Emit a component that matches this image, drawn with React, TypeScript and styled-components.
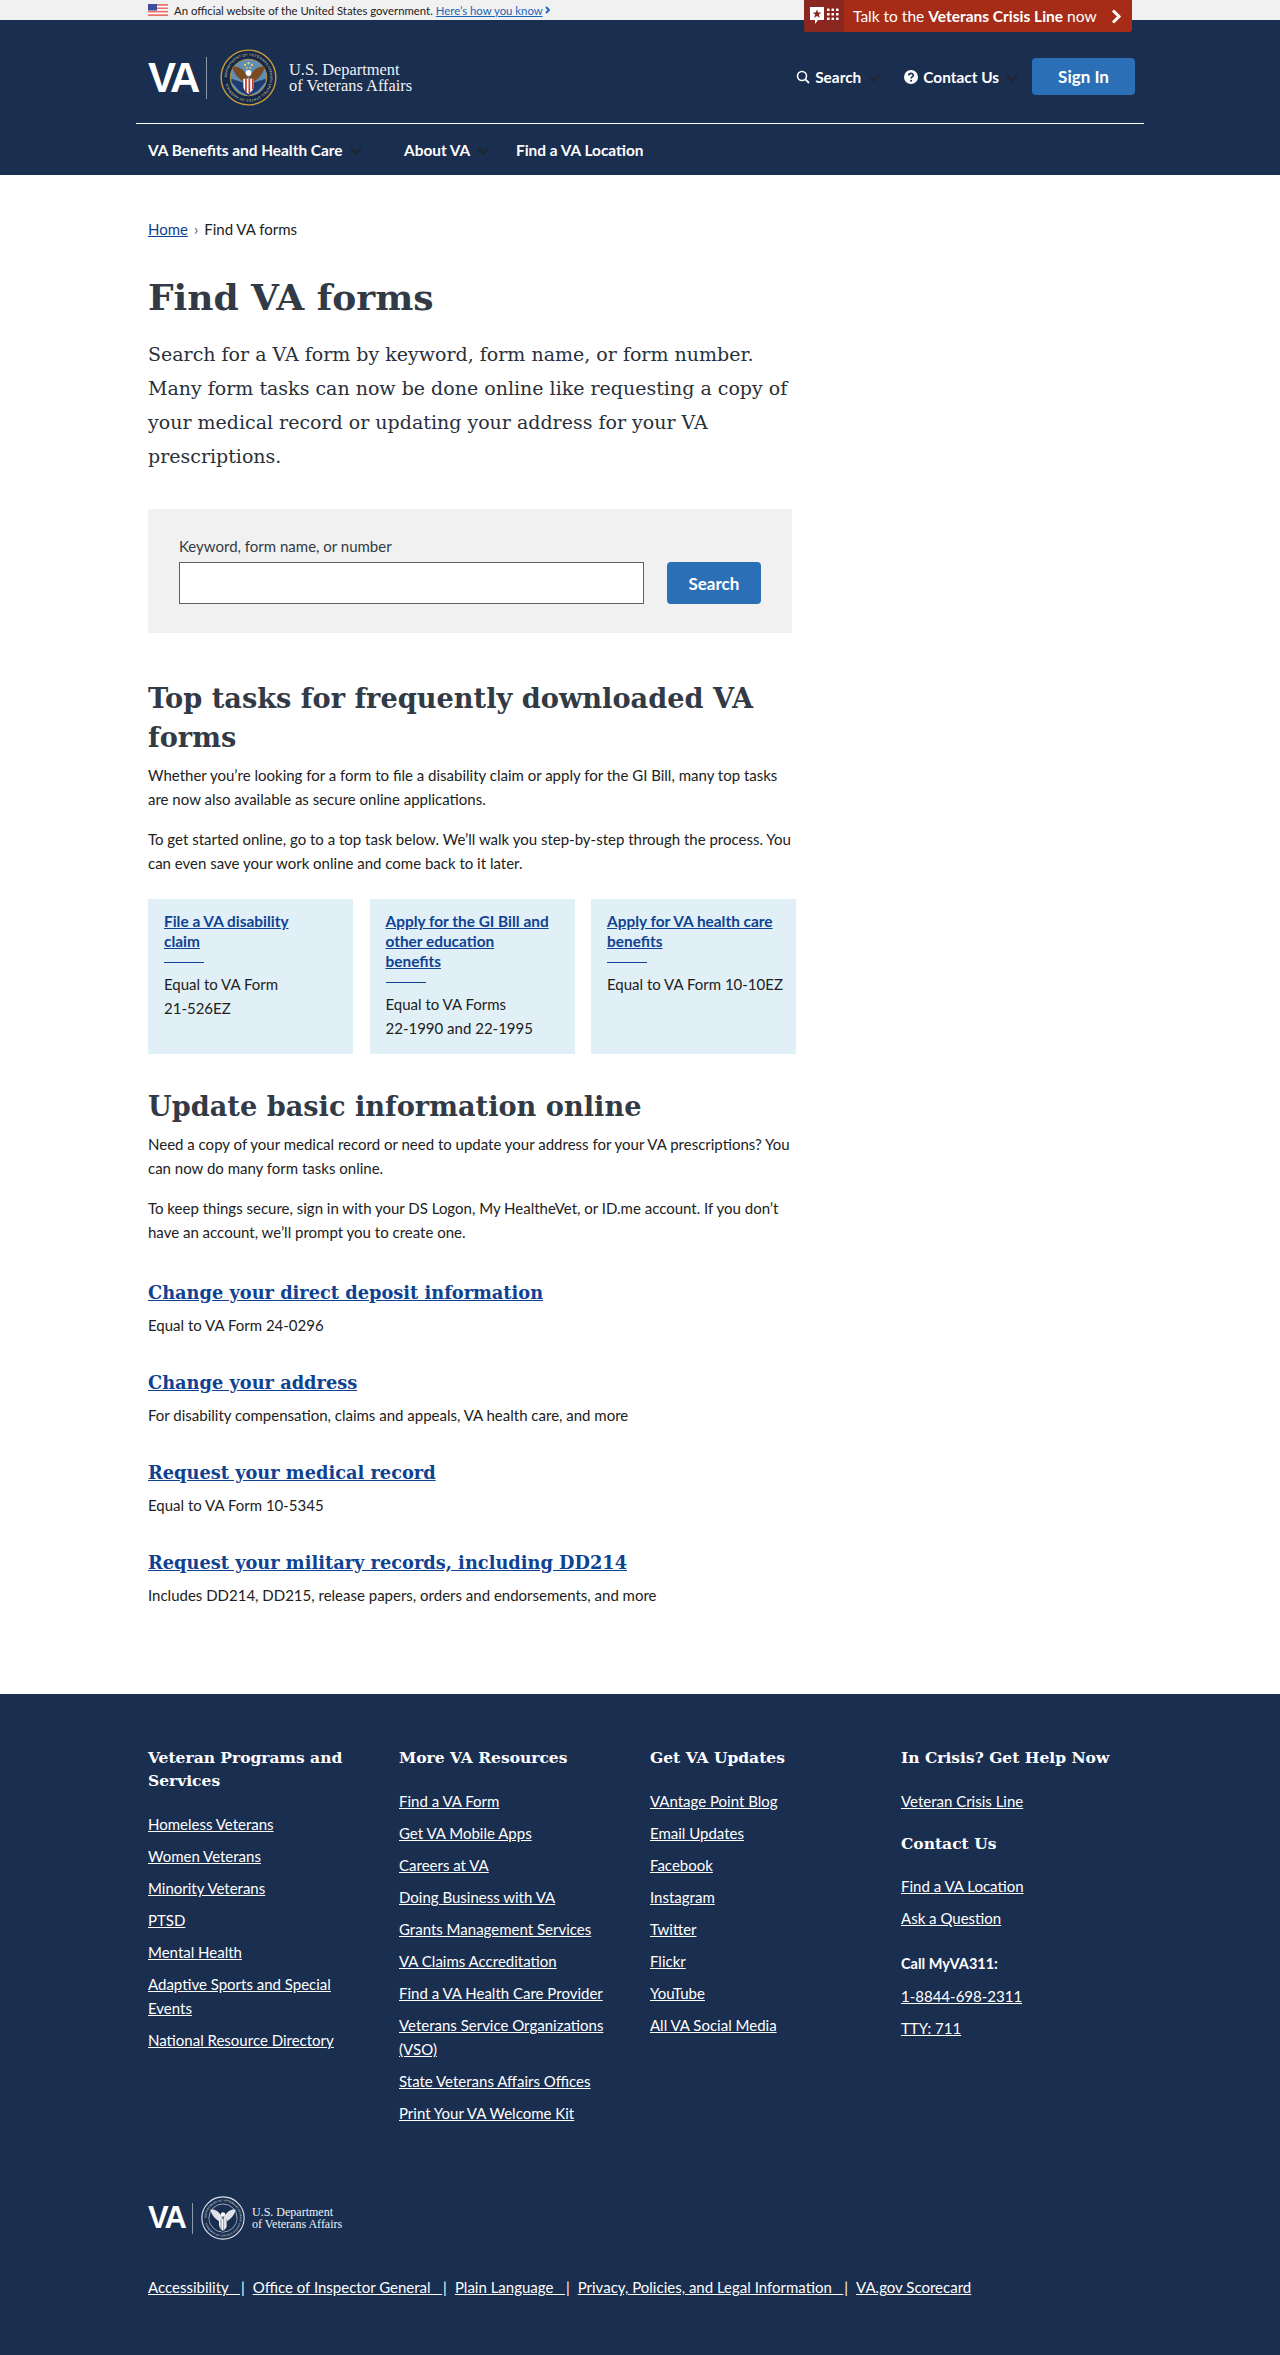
import React from "react";
import styled, { createGlobalStyle } from "styled-components";

const SANS = `"Lato", "Liberation Sans", sans-serif`;
const SLAB = `"DejaVu Serif", "Liberation Serif", serif`;
const NAVY = "#1a2e4f";
const LINK = "#0f4292";

const GlobalStyle = createGlobalStyle`
  html, body { margin: 0; padding: 0; background: #fff; }
  body { font-family: ${SANS}; font-size: 15px; color: #212121; }
  * { box-sizing: border-box; }
  a { cursor: pointer; }
`;

const Page = styled.div`
  width: 1280px;
  height: 2355px;
  position: relative;
  display: flex;
  flex-direction: column;
`;

/* top banner */
const Banner = styled.div`
  height: 20px;
  background: #f1f1f1;
  padding-left: 148px;
  display: flex;
  align-items: center;
  font-size: 11.35px;
  color: #212121;
`;

const Flag = styled.svg`
  width: 20px;
  height: 12px;
  margin-right: 6px;
`;

const BannerLink = styled.a`
  color: #1b64b8;
  text-decoration: underline;
  margin-left: 3px;
`;

const BannerChevron = styled.svg`
  width: 6px;
  height: 8px;
  margin-left: 2px;
`;

const CrisisButton = styled.a`
  position: absolute;
  top: 0;
  left: 804px;
  width: 328px;
  height: 32px;
  background: #a62c18;
  border-radius: 0 0 3px 3px;
  display: flex;
  align-items: center;
  color: #fff;
  font-size: 15.5px;
  overflow: hidden;
  b { font-weight: 700; }
`;

const CrisisIcon = styled.span`
  width: 40px;
  height: 32px;
  background: #8a2820;
  display: flex;
  align-items: center;
  justify-content: center;
  margin-right: 9px;
`;

const CrisisLabel = styled.span`
  flex: 1;
  white-space: pre;
`;

const CrisisChevron = styled.svg`
  width: 11px;
  height: 15px;
  margin-right: 10px;
`;

/* header */
const Header = styled.header`
  background: ${NAVY};
  height: 155px;
  padding: 0 136px;
  color: #fff;
`;

const HeaderTop = styled.div`
  height: 104px;
  border-bottom: 1px solid #fff;
  display: flex;
  align-items: flex-start;
  justify-content: space-between;
  padding: 29px 9px 0 12px;
`;

const LogoRow = styled.div`
  display: flex;
  align-items: center;
  height: 57px;
`;

const LogoVA = styled.span<{ $small?: boolean }>`
  font-family: "Liberation Sans", sans-serif;
  font-weight: 700;
  font-size: ${(p) => (p.$small ? "31px" : "42px")};
  letter-spacing: ${(p) => (p.$small ? "-2px" : "-3px")};
  width: ${(p) => (p.$small ? "35px" : "48px")};
  color: #fff;
`;

const LogoBar = styled.span<{ $small?: boolean }>`
  width: 1px;
  height: ${(p) => (p.$small ? "31px" : "42px")};
  background: #8d99ab;
  margin: ${(p) => (p.$small ? "0 8px 0 9px" : "0 13px 0 10px")};
`;

const LogoText = styled.span<{ $small?: boolean }>`
  font-family: "Liberation Serif", serif;
  font-size: ${(p) => (p.$small ? "12px" : "16.4px")};
  line-height: ${(p) => (p.$small ? "12px" : "16px")};
  margin-left: ${(p) => (p.$small ? "7px" : "12px")};
  color: #f0f2f5;
  white-space: nowrap;
`;

const UtilityRow = styled.div`
  display: flex;
  align-items: center;
  font-weight: 700;
  font-size: 15.4px;
  margin-top: 9px;
`;

const UtilityItem = styled.span<{ $gap: number }>`
  display: flex;
  align-items: center;
  margin-right: ${(p) => p.$gap}px;
  svg.lead { margin-right: 5px; }
`;

const Caret = styled.svg`
  width: 12px;
  height: 8px;
  margin-left: 7px;
  margin-top: 2px;
`;

const SignIn = styled.a`
  width: 103px;
  height: 37px;
  background: #2b6fb7;
  border-radius: 4px;
  display: flex;
  align-items: center;
  justify-content: center;
  font-weight: 700;
  font-size: 17px;
`;

const NavRow = styled.nav`
  height: 51px;
  display: flex;
  align-items: center;
  padding-left: 12px;
  font-weight: 700;
  font-size: 15.4px;
`;

const NavItem = styled.span<{ $width: number }>`
  display: flex;
  align-items: center;
  width: ${(p) => p.$width}px;
`;

/* main */
const Main = styled.main`
  padding: 0 0 0 148px;
  width: 796px;
  box-sizing: content-box;
  flex: 1;
`;

const Breadcrumb = styled.div`
  margin-top: 44px;
  height: 20px;
  line-height: 20px;
  font-size: 15px;
  a { color: ${LINK}; text-decoration: underline; }
  span { margin: 0 6px; color: #555; }
`;

const Title = styled.h1`
  font-family: ${SLAB};
  font-size: 36px;
  line-height: 48px;
  font-weight: 700;
  color: #323a45;
  margin: 34px 0 0;
`;

const Intro = styled.p`
  font-family: ${SLAB};
  font-size: 19px;
  line-height: 34px;
  color: #29303a;
  margin: 16px 0 0;
  width: 648px;
`;

const SearchBox = styled.form`
  width: 644px;
  height: 124px;
  margin-top: 36px;
  background: #f1f1f1;
  padding: 27px 31px 0;
`;

const SearchLabel = styled.label`
  display: block;
  font-size: 15px;
  line-height: 20px;
  color: #323a45;
`;

const SearchRow = styled.div`
  display: flex;
  gap: 23px;
  margin-top: 6px;
`;

const SearchInput = styled.div`
  width: 468px;
  height: 42px;
  background: #fff;
  border: 1px solid #5b616b;
`;

const SearchButton = styled.a`
  width: 95px;
  height: 42px;
  border-radius: 4px;
  background: #2b6fb7;
  color: #fff;
  font-weight: 700;
  font-size: 17px;
  display: flex;
  align-items: center;
  justify-content: center;
`;

const SectionTitle = styled.h2<{ $top: number }>`
  font-family: ${SLAB};
  font-size: 27.2px;
  line-height: 39px;
  font-weight: 700;
  color: #323a45;
  margin: ${(p) => p.$top}px 0 6px;
  width: 640px;
`;

const Body = styled.p<{ $top: number }>`
  font-size: 15px;
  line-height: 24px;
  margin: ${(p) => p.$top}px 0 0;
  width: 648px;
`;

const Cards = styled.div`
  width: 648px;
  height: 155px;
  margin-top: 24px;
  display: grid;
  grid-template-columns: 205px 205px 205px;
  column-gap: 16.5px;
`;

const Card = styled.div`
  background: #e1f0f7;
  padding: 12px 16px 0;
`;

const CardTitle = styled.a`
  display: block;
  font-weight: 700;
  font-size: 15.4px;
  line-height: 20px;
  color: ${LINK};
  text-decoration: underline;
  white-space: nowrap;
`;

const CardRule = styled.hr`
  width: 40px;
  height: 1px;
  border: 0;
  background: ${LINK};
  margin: 11px 0 9px;
`;

const CardText = styled.div`
  font-size: 15px;
  line-height: 24px;
  white-space: nowrap;
`;

const TaskLink = styled.a`
  display: block;
  font-family: ${SLAB};
  font-weight: 700;
  font-size: 17.8px;
  line-height: 30px;
  color: ${LINK};
  text-decoration: underline;
`;

const TaskItem = styled.div<{ $top: number }>`
  margin-top: ${(p) => p.$top}px;
`;

const TaskText = styled.div`
  font-size: 15px;
  line-height: 24px;
  margin-top: 5px;
`;

/* footer */
const Footer = styled.footer`
  background: ${NAVY};
  height: 661px;
  padding: 52px 0 0 148px;
  color: #fff;
`;

const FooterColumns = styled.div`
  display: grid;
  grid-template-columns: repeat(4, 251px);
  height: 450px;
`;

const FooterHeading = styled.h3<{ $top?: number }>`
  font-family: ${SLAB};
  font-size: 15.5px;
  line-height: 23px;
  font-weight: 700;
  margin: ${(p) => p.$top || 0}px 0 0;
  width: 220px;
`;

const FooterList = styled.ul<{ $top?: number }>`
  list-style: none;
  margin: ${(p) => p.$top ?? 20}px 0 0;
  padding: 0;
  width: 220px;
`;

const FooterItem = styled.li`
  margin-bottom: 8px;
  font-size: 15px;
  line-height: 24px;
  a { color: #fff; text-decoration: underline; }
`;

const CallLabel = styled.div`
  font-weight: 700;
  font-size: 14.5px;
  line-height: 24px;
  margin-top: 22px;
`;

const FooterLogo = styled.div`
  display: flex;
  align-items: center;
  height: 44px;
`;

const FooterLinks = styled.div`
  display: flex;
  align-items: center;
  margin-top: 35px;
  font-size: 15px;
  line-height: 24px;
  white-space: pre;
`;

const FooterLink = styled.a`
  color: #fff;
  text-decoration: underline;
`;

const Pipe = styled.span`
  margin: 0 8px 0 1px;
`;

const CaretIcon = () => (
  <Caret viewBox="0 0 12 8">
    <path d="M1 1.5 6 6.5 11 1.5" fill="none" stroke="#20262e" strokeWidth="2.4" />
  </Caret>
);

const Seal = ({ size, mono }: { size: number; mono?: boolean }) => {
  const ring = mono ? "#dfe3e9" : "#c89b3c";
  const inner = mono ? NAVY : "#5f8fb4";
  const wing = mono ? "#dfe3e9" : "#7a4a22";
  const arcId = mono ? "sealArcM" : "sealArc";
  return (
    <svg width={size} height={size} viewBox="0 0 100 100">
      <defs>
        <path id={arcId} d="M50 50m-38 0a38 38 0 1 1 76 0a38 38 0 1 1 -76 0" />
      </defs>
      <circle cx="50" cy="50" r="48" fill={mono ? NAVY : "#14284a"} stroke={ring} strokeWidth="2.5" />
      <circle cx="50" cy="50" r="32" fill={inner} stroke={ring} strokeWidth="1.5" />
      <text fontSize="6" fontFamily="Liberation Sans, sans-serif" fill={mono ? "#dfe3e9" : "#d9c48a"}>
        <textPath href={`#${arcId}`} textLength="228" lengthAdjust="spacingAndGlyphs">
          DEPARTMENT OF VETERANS AFFAIRS UNITED STATES OF AMERICA
        </textPath>
      </text>
      <path d="M20 58 34 74 50 82 66 74 80 58 80 52 50 62 20 52Z" fill={mono ? NAVY : "#1e3a6e"} />
      <path d="M49 50C42 34 30 29 21 31 24 41 31 53 46 60Z" fill={wing} />
      <path d="M51 50C58 34 70 29 79 31 76 41 69 53 54 60Z" fill={wing} />
      <circle cx="50" cy="42" r="5" fill="#fff" />
      <path d="M41 52H59V66C59 72 54 76 50 79 46 76 41 72 41 66Z" fill="#fff" />
      <path d="M44 52H47V76H44ZM50 52H53V78H50ZM56 52H59V70H56Z" fill={mono ? "#9aa5b5" : "#c0392b"} />
      {!mono && (
        <g fill="#f0d060">
          <circle cx="44" cy="28" r="2" />
          <circle cx="50" cy="25" r="2" />
          <circle cx="56" cy="28" r="2" />
          <circle cx="47" cy="33" r="1.6" />
          <circle cx="53" cy="33" r="1.6" />
        </g>
      )}
    </svg>
  );
};

const StarBubble = () => (
  <svg width="29" height="18" viewBox="0 0 29 18">
    <path d="M0 0H14V13H8L5 17 5 13H0Z" fill="#fff" />
    <path d="M7 2.5 8.2 5.6 11.4 5.6 8.9 7.6 9.8 10.8 7 9 4.2 10.8 5.1 7.6 2.6 5.6 5.8 5.6Z" fill="#8a2820" />
    <g fill="#fff">
      {[1.5, 6, 10.5].map((y) =>
        [17, 21.5, 26].map((x) => <rect key={`${x}-${y}`} x={x} y={y} width="2.6" height="2.6" rx="0.6" />)
      )}
    </g>
  </svg>
);

const programs = [
  "Homeless Veterans",
  "Women Veterans",
  "Minority Veterans",
  "PTSD",
  "Mental Health",
  "Adaptive Sports and Special Events",
  "National Resource Directory",
];

const resources = [
  "Find a VA Form",
  "Get VA Mobile Apps",
  "Careers at VA",
  "Doing Business with VA",
  "Grants Management Services",
  "VA Claims Accreditation",
  "Find a VA Health Care Provider",
  "Veterans Service Organizations (VSO)",
  "State Veterans Affairs Offices",
  "Print Your VA Welcome Kit",
];

const updates = [
  "VAntage Point Blog",
  "Email Updates",
  "Facebook",
  "Instagram",
  "Twitter",
  "Flickr",
  "YouTube",
  "All VA Social Media",
];

const tasks = [
  { title: "Change your direct deposit information", text: "Equal to VA Form 24-0296" },
  { title: "Change your address", text: "For disability compensation, claims and appeals, VA health care, and more" },
  { title: "Request your medical record", text: "Equal to VA Form 10-5345" },
  { title: "Request your military records, including DD214", text: "Includes DD214, DD215, release papers, orders and endorsements, and more" },
];

const legal = [
  "Accessibility   ",
  "Office of Inspector General   ",
  "Plain Language   ",
  "Privacy, Policies, and Legal Information   ",
];

const FooterGroup = ({ items, top }: { items: string[]; top?: number }) => (
  <FooterList $top={top}>
    {items.map((item) => (
      <FooterItem key={item}>
        <a>{item}</a>
      </FooterItem>
    ))}
  </FooterList>
);

const App: React.FC = () => (
  <Page>
    <GlobalStyle />
    <Banner>
      <Flag viewBox="0 0 20 12">
        <rect width="20" height="12" fill="#fff" />
        <path d="M0 0H20V1.7H0ZM0 3.4H20V5.1H0ZM0 6.8H20V8.5H0ZM0 10.2H20V12H0Z" fill="#e8736a" />
        <rect width="9" height="6.5" fill="#3d4f9a" />
      </Flag>
      An official website of the United States government.
      <BannerLink>Here’s how you know</BannerLink>
      <BannerChevron viewBox="0 0 6 8">
        <path d="M1 1 4 4 1 7" fill="none" stroke="#1b64b8" strokeWidth="1.8" />
      </BannerChevron>
    </Banner>
    <CrisisButton>
      <CrisisIcon>
        <StarBubble />
      </CrisisIcon>
      <CrisisLabel>
        Talk to the <b>Veterans Crisis Line</b> now
      </CrisisLabel>
      <CrisisChevron viewBox="0 0 11 15">
        <path d="M2 1.5 8 7.5 2 13.5" fill="none" stroke="#fff" strokeWidth="3" />
      </CrisisChevron>
    </CrisisButton>
    <Header>
      <HeaderTop>
        <LogoRow>
          <LogoVA>VA</LogoVA>
          <LogoBar />
          <Seal size={57} />
          <LogoText>
            U.S. Department
            <br />
            of Veterans Affairs
          </LogoText>
        </LogoRow>
        <UtilityRow>
          <UtilityItem $gap={24}>
            <svg className="lead" width="14" height="14" viewBox="0 0 14 14">
              <circle cx="6" cy="6" r="4.5" fill="none" stroke="#fff" strokeWidth="1.6" />
              <path d="M9.4 9.4 13 13" stroke="#fff" strokeWidth="1.8" />
            </svg>
            Search
            <CaretIcon />
          </UtilityItem>
          <UtilityItem $gap={14}>
            <svg className="lead" width="14" height="14" viewBox="0 0 14 14">
              <circle cx="7" cy="7" r="7" fill="#fff" />
              <path d="M4.8 5.4C4.8 2.7 9.3 2.7 9.3 5.3 9.3 6.8 7.1 7 7.1 8.4" fill="none" stroke={NAVY} strokeWidth="1.6" />
              <circle cx="7.1" cy="10.7" r="1" fill={NAVY} />
            </svg>
            Contact Us
            <CaretIcon />
          </UtilityItem>
          <SignIn>Sign In</SignIn>
        </UtilityRow>
      </HeaderTop>
      <NavRow>
        <NavItem $width={256}>
          VA Benefits and Health Care
          <CaretIcon />
        </NavItem>
        <NavItem $width={112}>
          About VA
          <CaretIcon />
        </NavItem>
        <NavItem $width={140}>Find a VA Location</NavItem>
      </NavRow>
    </Header>
    <Main>
      <Breadcrumb>
        <a>Home</a>
        <span>›</span>Find VA forms
      </Breadcrumb>
      <Title>Find VA forms</Title>
      <Intro>
        Search for a VA form by keyword, form name, or form number. Many form tasks can now be done online like requesting a copy of your medical record or updating your address for your VA prescriptions.
      </Intro>
      <SearchBox>
        <SearchLabel>Keyword, form name, or number</SearchLabel>
        <SearchRow>
          <SearchInput />
          <SearchButton>Search</SearchButton>
        </SearchRow>
      </SearchBox>
      <SectionTitle $top={46}>Top tasks for frequently downloaded VA forms</SectionTitle>
      <Body $top={0}>
        Whether you’re looking for a form to file a disability claim or apply for the GI Bill, many top tasks are now also available as secure online applications.
      </Body>
      <Body $top={16}>
        To get started online, go to a top task below. We’ll walk you step-by-step through the process. You can even save your work online and come back to it later.
      </Body>
      <Cards>
        <Card>
          <CardTitle>
            File a VA disability
            <br />
            claim
          </CardTitle>
          <CardRule />
          <CardText>
            Equal to VA Form
            <br />
            21-526EZ
          </CardText>
        </Card>
        <Card>
          <CardTitle>
            Apply for the GI Bill and
            <br />
            other education
            <br />
            benefits
          </CardTitle>
          <CardRule />
          <CardText>
            Equal to VA Forms
            <br />
            22-1990 and 22-1995
          </CardText>
        </Card>
        <Card>
          <CardTitle>
            Apply for VA health care
            <br />
            benefits
          </CardTitle>
          <CardRule />
          <CardText>Equal to VA Form 10-10EZ</CardText>
        </Card>
      </Cards>
      <SectionTitle $top={33}>Update basic information online</SectionTitle>
      <Body $top={0}>
        Need a copy of your medical record or need to update your address for your VA prescriptions? You can now do many form tasks online.
      </Body>
      <Body $top={16}>
        To keep things secure, sign in with your DS Logon, My HealtheVet, or ID.me account. If you don’t have an account, we’ll prompt you to create one.
      </Body>
      {tasks.map((task, i) => (
        <TaskItem key={task.title} $top={i === 0 ? 34 : 31}>
          <TaskLink>{task.title}</TaskLink>
          <TaskText>{task.text}</TaskText>
        </TaskItem>
      ))}
    </Main>
    <Footer>
      <FooterColumns>
        <div>
          <FooterHeading>Veteran Programs and Services</FooterHeading>
          <FooterGroup items={programs} />
        </div>
        <div>
          <FooterHeading>More VA Resources</FooterHeading>
          <FooterGroup items={resources} />
        </div>
        <div>
          <FooterHeading>Get VA Updates</FooterHeading>
          <FooterGroup items={updates} />
        </div>
        <div>
          <FooterHeading>In Crisis? Get Help Now</FooterHeading>
          <FooterGroup items={["Veteran Crisis Line"]} />
          <FooterHeading $top={19}>Contact Us</FooterHeading>
          <FooterGroup items={["Find a VA Location", "Ask a Question"]} top={19} />
          <CallLabel>Call MyVA311:</CallLabel>
          <FooterGroup items={["1-8844-698-2311", "TTY: 711"]} top={8} />
        </div>
      </FooterColumns>
      <FooterLogo>
        <LogoVA $small>VA</LogoVA>
        <LogoBar $small />
        <Seal size={44} mono />
        <LogoText $small>
          U.S. Department
          <br />
          of Veterans Affairs
        </LogoText>
      </FooterLogo>
      <FooterLinks>
        {legal.map((label) => (
          <React.Fragment key={label}>
            <FooterLink>{label}</FooterLink>
            <Pipe>|</Pipe>
          </React.Fragment>
        ))}
        <FooterLink>VA.gov Scorecard</FooterLink>
      </FooterLinks>
    </Footer>
  </Page>
);

export default App;
